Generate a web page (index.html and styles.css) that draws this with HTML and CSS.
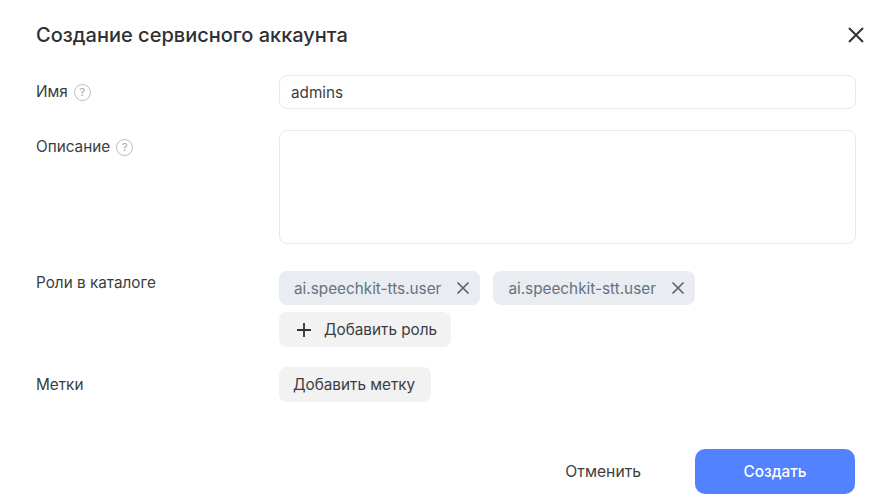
FILE: index.html

```html
<!DOCTYPE html>
<html lang="ru">
<head>
  <meta charset="UTF-8" />
  <title>Создание сервисного аккаунта</title>
  <link rel="stylesheet" href="styles.css">
</head>
<body>
  <section class="dialog">
    <header class="dialog-head">
      <h2>Создание сервисного аккаунта</h2>
      <button class="close-btn" type="button" aria-label="Закрыть">
        <svg width="16" height="16" viewBox="0 0 16 16"><path d="M1 1l14 14M15 1L1 15" /></svg>
      </button>
    </header>

    <form class="dialog-form">
      <div class="row row-name">
        <label>Имя <span class="hint">?</span></label>
        <input class="field" type="text" value="admins" />
      </div>
      <div class="row row-desc">
        <label>Описание <span class="hint">?</span></label>
        <textarea class="field area"></textarea>
      </div>
      <div class="row row-roles">
        <label>Роли в каталоге</label>
        <div class="roles">
          <div class="chips">
            <span class="chip">ai.speechkit-tts.user
              <svg width="14" height="14" viewBox="0 0 14 14"><path d="M1.5 1.5l11 11M12.5 1.5l-11 11" /></svg>
            </span>
            <span class="chip">ai.speechkit-stt.user
              <svg width="14" height="14" viewBox="0 0 14 14"><path d="M1.5 1.5l11 11M12.5 1.5l-11 11" /></svg>
            </span>
          </div>
          <button class="btn btn-add" type="button">
            <svg width="16" height="16" viewBox="0 0 16 16"><path d="M8 1v14M1 8h14" /></svg>
            Добавить роль
          </button>
        </div>
      </div>
      <div class="row row-tags">
        <label>Метки</label>
        <button class="btn btn-tag" type="button">Добавить метку</button>
      </div>
      <div class="actions">
        <button class="btn-cancel" type="button">Отменить</button>
        <button class="btn-create" type="submit">Создать</button>
      </div>
    </form>
  </section>
</body>
</html>
```

FILE: styles.css

```css
* {
  box-sizing: border-box;
}

body {
  margin: 0;
  background: #ffffff;
  font-family: 'Inter', 'Noto Sans', sans-serif;
  font-size: 15.3px;
  color: #3b3d40;
}

button, input, textarea {
  font-family: inherit;
  font-size: 15.3px;
  color: inherit;
}

.dialog {
  padding: 20px 19px 0 36px;
}

.dialog-head {
  display: flex;
  justify-content: space-between;
  align-items: center;
  height: 29px;
  margin-bottom: 26px;
}

.dialog-head h2 {
  margin: 0;
  font-size: 20px;
  font-weight: 500;
  color: #2f3033;
}

.close-btn {
  display: flex;
  margin-right: -8px;
  padding: 0;
  border: none;
  background: none;
}

.close-btn svg path {
  fill: none;
  stroke: #333333;
  stroke-width: 2;
}

.row {
  display: grid;
  grid-template-columns: 243px 1fr;
  align-items: start;
}

.row label {
  display: flex;
  align-items: center;
  gap: 6px;
  line-height: 20px;
}

.hint {
  display: inline-block;
  width: 17px;
  height: 17px;
  border: 1px solid #bdbdbd;
  border-radius: 50%;
  font-size: 11px;
  line-height: 15px;
  text-align: center;
  color: #a3a3a3;
}

.row-name {
  margin-bottom: 21px;
}

.row-name label {
  padding-top: 7px;
}

.row-desc {
  margin-bottom: 27px;
}

.row-desc label {
  padding-top: 7px;
}

.row-roles {
  margin-bottom: 20px;
}

.row-roles label {
  padding-top: 2px;
}

.row-tags {
  margin-bottom: 47px;
}

.row-tags label {
  padding-top: 8px;
}

.field {
  display: block;
  width: 100%;
  height: 34px;
  padding: 0 11px;
  border: 1px solid #e8e8e8;
  border-radius: 8px;
  background: #ffffff;
  outline: none;
}

.area {
  height: 114px;
  resize: none;
}

.roles {
  display: flex;
  flex-direction: column;
  align-items: flex-start;
  gap: 7px;
}

.chips {
  display: flex;
  gap: 13px;
}

.chip {
  display: flex;
  align-items: center;
  justify-content: space-between;
  gap: 15px;
  height: 34px;
  padding: 0 10px 0 15px;
  border-radius: 8px;
  background: #e9ecf0;
  color: #66727f;
}

.chip svg path {
  fill: none;
  stroke: #5b6570;
  stroke-width: 1.7;
}

.btn {
  display: flex;
  align-items: center;
  justify-self: start;
  height: 35px;
  padding: 0 14px;
  border: none;
  border-radius: 8px;
  background: #f2f2f2;
}

.btn-add {
  gap: 12px;
  padding-left: 17px;
}

.btn-add svg path {
  fill: none;
  stroke: #333333;
  stroke-width: 1.8;
}

.btn-tag {
  padding-right: 16px;
}

.actions {
  display: flex;
  justify-content: flex-end;
  align-items: center;
  gap: 54px;
  margin-right: 1px;
}

.btn-cancel {
  padding: 0;
  border: none;
  background: none;
  font-size: 15.7px;
}

.btn-create {
  width: 160px;
  height: 45px;
  border: none;
  border-radius: 10px;
  background: #5282ff;
  color: #ffffff;
  font-weight: 500;
}
```
